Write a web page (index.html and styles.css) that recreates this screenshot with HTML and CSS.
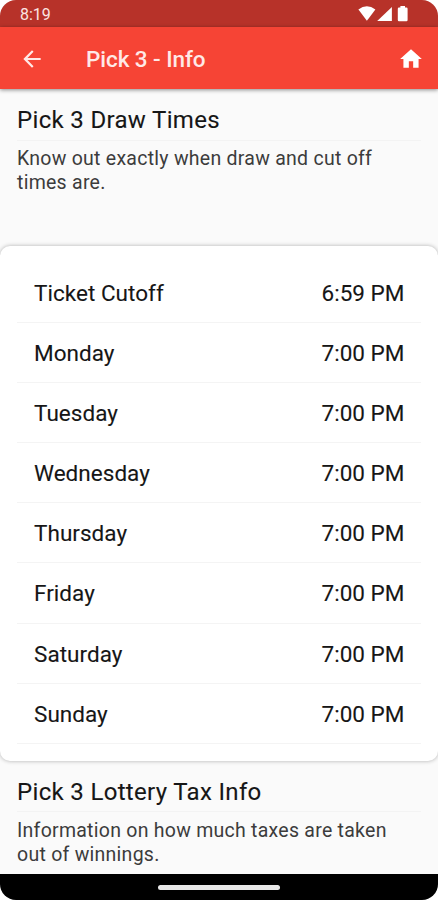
FILE: index.html
```html
<!DOCTYPE html>
<html lang="en">
<head>
<meta charset="utf-8">
<title>Pick 3 - Info</title>
<link rel="stylesheet" href="styles.css">
</head>
<body>
<div class="phone">
  <div class="status">
    <span class="clock">8:19</span>
    <svg class="status-icons" width="52" height="18" viewBox="0 0 52 18" fill="#fff">
      <path d="M0.4 3.6Q8.9 -3 17.4 3.6L8.9 14.8Z"/>
      <path d="M33.9 1V15H19.2Z"/>
      <path d="M42.4 1.5V0h4.6v1.5h1.4q1.2 0 1.2 1.2v11.3q0 1.2-1.2 1.2h-7.4q-1.2 0-1.2-1.2V2.7q0-1.2 1.2-1.2z"/>
    </svg>
  </div>
  <header class="appbar">
    <svg class="back" width="26" height="26" viewBox="0 0 24 24" fill="#ffe9e7"><path d="M20 11H7.83l5.59-5.59L12 4l-8 8 8 8 1.41-1.41L7.83 13H20v-2z"/></svg>
    <h1>Pick 3 - Info</h1>
    <svg class="home" width="26" height="26" viewBox="0 0 24 24" fill="#fff"><path d="M10 20v-6h4v6h5v-8h3L12 3 2 12h3v8z"/></svg>
  </header>
  <main>
    <section class="intro">
      <h2>Pick 3 Draw Times</h2>
      <p>Know out exactly when draw and cut off<br>times are.</p>
    </section>
    <ul class="card">
      <li><span>Ticket Cutoff</span><span>6:59 PM</span></li>
      <li><span>Monday</span><span>7:00 PM</span></li>
      <li><span>Tuesday</span><span>7:00 PM</span></li>
      <li><span>Wednesday</span><span>7:00 PM</span></li>
      <li><span>Thursday</span><span>7:00 PM</span></li>
      <li><span>Friday</span><span>7:00 PM</span></li>
      <li><span>Saturday</span><span>7:00 PM</span></li>
      <li><span>Sunday</span><span>7:00 PM</span></li>
    </ul>
    <section class="intro tax">
      <h2>Pick 3 Lottery Tax Info</h2>
      <p>Information on how much taxes are taken<br>out of winnings.</p>
    </section>
  </main>
  <nav class="navbar"><span class="handle"></span></nav>
</div>
</body>
</html>
```
FILE: styles.css
```css
* { box-sizing: border-box; margin: 0; padding: 0; }
body { background: #fff; font-family: Roboto, sans-serif; color: #161616; }
.phone { width: 438px; height: 900px; display: flex; flex-direction: column; overflow: hidden; border-radius: 16px; background: #fafafa; }
.status { height: 27px; flex: none; background: #b73229; display: flex; justify-content: space-between; padding: 0 28px 0 20px; }
.clock { color: #fbe4e2; font-size: 16px; line-height: 29px; }
.status-icons { margin-top: 6px; }
.appbar { height: 62px; flex: none; background: #f64435; display: flex; align-items: center; padding: 1px 14px 0 19px; box-shadow: 0 1px 4px rgba(0,0,0,.45); position: relative; }
.appbar h1 { flex: 1; margin-left: 41px; color: #ffe9e7; font-size: 22.5px; font-weight: 500; line-height: 30px; padding-top: 1px; letter-spacing: -.07px; }
main { flex: 1; min-height: 0; overflow: hidden; }
.intro { height: 157px; padding: 16px 17px 0; }
.intro h2 { font-size: 24px; font-weight: 400; line-height: 31px; height: 36px; border-bottom: 1px solid #f3f3f3; letter-spacing: .33px; -webkit-text-stroke: .1px currentColor; }
.intro p { font-size: 19.5px; line-height: 23.5px; margin-top: 6px; color: #3c3c3c; letter-spacing: .26px; white-space: nowrap; }
.card { list-style: none; height: 515px; background: #fff; border-radius: 10px; padding: 17px 17px 0; box-shadow: 0 0 4px rgba(0,0,0,.3); }
.card li { height: 60.1px; border-bottom: 1px solid #f4f4f4; padding: 0 16.5px 0 17px; display: flex; justify-content: space-between; font-size: 22.5px; line-height: 60.2px; letter-spacing: .03px; -webkit-text-stroke: .1px currentColor; }
.tax { padding-top: 16px; height: 113px; }
.tax h2 { height: 35px; }
.tax p { margin-top: 7px; }
.navbar { height: 26px; flex: none; background: #000; display: flex; justify-content: center; align-items: center; }
.handle { width: 122px; height: 5px; border-radius: 3px; background: #e8e8e8; }
```
